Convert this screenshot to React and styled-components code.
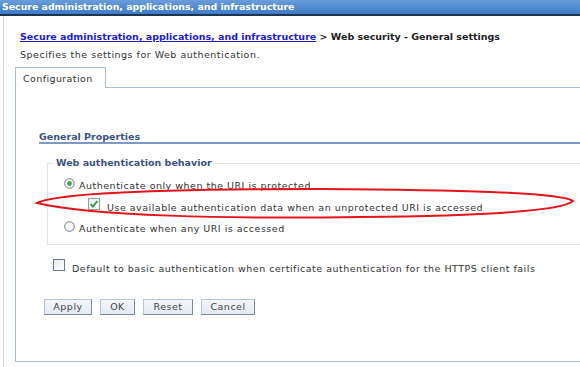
import React from "react";
import styled, { createGlobalStyle } from "styled-components";

const Global = createGlobalStyle`
  html, body { margin: 0; padding: 0; background: #fff; }
  body { font-family: "DejaVu Sans", Verdana, sans-serif; }
`;

const Page = styled.div`
  position: relative;
  width: 580px;
  height: 367px;
  overflow: hidden;
  background: #fff;
  display: flex;
  flex-direction: column;
`;

const TitleBar = styled.div`
  height: 14px;
  line-height: 14px;
  padding-left: 2px;
  background: linear-gradient(#6a9ddb, #3f7bc6);
  border-bottom: 2px solid #1e3552;
  color: #fff;
  font-weight: bold;
  font-size: 9.4px;
  white-space: nowrap;
  flex: none;
`;

const Frame = styled.div`
  flex: 1;
  margin-left: 3px;
  border-left: 1px solid #cfd3da;
  padding-left: 11px;
  display: flex;
  flex-direction: column;
`;

const Crumb = styled.div`
  margin-top: 15px;
  padding-left: 5px;
  font-size: 9.5px;
  font-weight: bold;
  color: #222;
  white-space: nowrap;
  line-height: 12px;
`;

const CrumbLink = styled.a`
  color: #1c1ccc;
  text-decoration: underline;
`;

const Desc = styled.div`
  margin-top: 6px;
  padding-left: 5px;
  font-size: 9.5px;
  letter-spacing: 0.5px;
  color: #333;
  line-height: 12px;
  white-space: nowrap;
`;

const TabStrip = styled.div`
  margin-top: 6px;
  display: flex;
  border-bottom: 1px solid #a9bcd6;
  margin-right: -20px;
`;

const Tab = styled.div`
  width: 82px;
  height: 20px;
  line-height: 22px;
  padding-left: 7px;
  border: 1px solid #a9bcd6;
  border-bottom: none;
  background: #fff;
  font-size: 9.5px;
  letter-spacing: 0.4px;
  color: #333;
  margin-bottom: -1px;
`;

const Panel = styled.div`
  flex: none;
  height: 273px;
  border-left: 1px solid #a9bcd6;
  border-bottom: 1px solid #a9bcd6;
  margin-right: -20px;
  padding-left: 23px;
  display: flex;
  flex-direction: column;
`;

const SectionTitle = styled.div`
  margin-top: 43px;
  font-size: 9.5px;
  font-weight: bold;
  color: #3a5285;
  line-height: 11px;
  border-bottom: 2px solid #7d98c2;
`;

const Fieldset = styled.div`
  position: relative;
  margin-top: 19px;
  margin-left: 8px;
  height: 71px;
  border: 1px solid #dfe2e6;
  border-right: none;
  padding-top: 9px;
  padding-left: 16px;
  display: flex;
  flex-direction: column;
`;

const Legend = styled.div`
  position: absolute;
  top: -7px;
  left: 5px;
  padding: 0 3px;
  background: #fff;
  font-size: 9.5px;
  font-weight: bold;
  color: #3a5285;
  line-height: 12px;
`;

const Option = styled.div`
  display: flex;
  align-items: center;
  flex: none;
  height: ${(p) => p.$h || 21}px;
  padding-left: ${(p) => p.$indent || 0}px;
  gap: ${(p) => p.$gap || 4}px;
  font-size: 9.5px;
  letter-spacing: 0.5px;
  color: #333;
  white-space: nowrap;
`;

const Label = styled.span`
  position: relative;
  top: ${(p) => p.$dy || 0}px;
`;

const IconBox = styled.span`
  display: flex;
  position: relative;
  top: ${(p) => p.$dy || 0}px;
`;

const Standalone = styled(Option)`
  margin-top: 10px;
  padding-left: 14px;
  gap: 7px;
`;

const Buttons = styled.div`
  display: flex;
  gap: 8px;
  margin-top: 24px;
  margin-left: 5px;
`;

const Button = styled.button`
  height: 16px;
  width: ${(p) => p.$w}px;
  padding: 0;
  font-family: "DejaVu Sans", Verdana, sans-serif;
  font-size: 9.5px;
  letter-spacing: 0.5px;
  color: #444;
  background: linear-gradient(#f4f7fb, #e3eaf4);
  border: 1px solid #b7c4d6;
  border-right-color: #7d8aa0;
  border-bottom-color: #7d8aa0;
  line-height: 14px;
`;

const Oval = styled.svg`
  position: absolute;
  left: 0;
  top: 0;
  pointer-events: none;
`;

const RadioIcon = ({ on }) => (
  <svg width="11" height="11" viewBox="0 0 11 11">
    <circle cx="5.5" cy="5.5" r="4.8" fill="#fff" stroke="#6f7780" strokeWidth="1" />
    {on && <circle cx="5.5" cy="5.5" r="2.4" fill="#3aa54a" />}
  </svg>
);

const CheckIcon = ({ on }) => (
  <svg width="12" height="12" viewBox="0 0 12 12">
    <defs>
      <linearGradient id={on ? "cg1" : "cg2"} x1="0" y1="0" x2="1" y2="1">
        <stop offset="0" stopColor="#e6eaf0" />
        <stop offset="1" stopColor="#ffffff" />
      </linearGradient>
    </defs>
    <rect
      x="0.5"
      y="0.5"
      width="11"
      height="11"
      fill={`url(#${on ? "cg1" : "cg2"})`}
      stroke={on ? "#8fa49a" : "#6c7a90"}
      strokeWidth="1"
    />
    {on && (
      <path d="M2.6 6.2 L4.9 8.6 L9.4 3.0" fill="none" stroke="#2e9a3a" strokeWidth="1.8" />
    )}
  </svg>
);

export default function App() {
  return (
    <>
      <Global />
      <Page>
        <TitleBar>Secure administration, applications, and infrastructure</TitleBar>
        <Frame>
          <Crumb>
            <CrumbLink href="#">Secure administration, applications, and infrastructure</CrumbLink>
            {" > Web security - General settings"}
          </Crumb>
          <Desc>Specifies the settings for Web authentication.</Desc>
          <TabStrip>
            <Tab>Configuration</Tab>
          </TabStrip>
          <Panel>
            <SectionTitle>General Properties</SectionTitle>
            <Fieldset>
              <Legend>Web authentication behavior</Legend>
              <Option $h={22}>
                <IconBox $dy={-1}>
                  <RadioIcon on />
                </IconBox>
                <Label $dy={1}>Authenticate only when the URI is protected</Label>
              </Option>
              <Option $h={20} $indent={24} $gap={7}>
                <IconBox $dy={-1}>
                  <CheckIcon on />
                </IconBox>
                <Label $dy={2}>Use available authentication data when an unprotected URI is accessed</Label>
              </Option>
              <Option $h={24}>
                <IconBox $dy={-1}>
                  <RadioIcon />
                </IconBox>
                <Label $dy={1}>Authenticate when any URI is accessed</Label>
              </Option>
            </Fieldset>
            <Standalone $h={20}>
              <IconBox>
                <CheckIcon />
              </IconBox>
              <Label $dy={3}>Default to basic authentication when certificate authentication for the HTTPS client fails</Label>
            </Standalone>
            <Buttons>
              <Button $w={48}>Apply</Button>
              <Button $w={35}>OK</Button>
              <Button $w={50}>Reset</Button>
              <Button $w={54}>Cancel</Button>
            </Buttons>
          </Panel>
        </Frame>
        <Oval width="580" height="367" viewBox="0 0 580 367">
          <path
            d="M37 203 C 60 191, 200 189, 320 189 C 450 190, 560 192, 573 201 C 560 212, 470 216, 360 217 C 230 219, 90 216, 37 203 Z"
            fill="none"
            stroke="#e3141b"
            strokeWidth="2"
          />
        </Oval>
      </Page>
    </>
  );
}
